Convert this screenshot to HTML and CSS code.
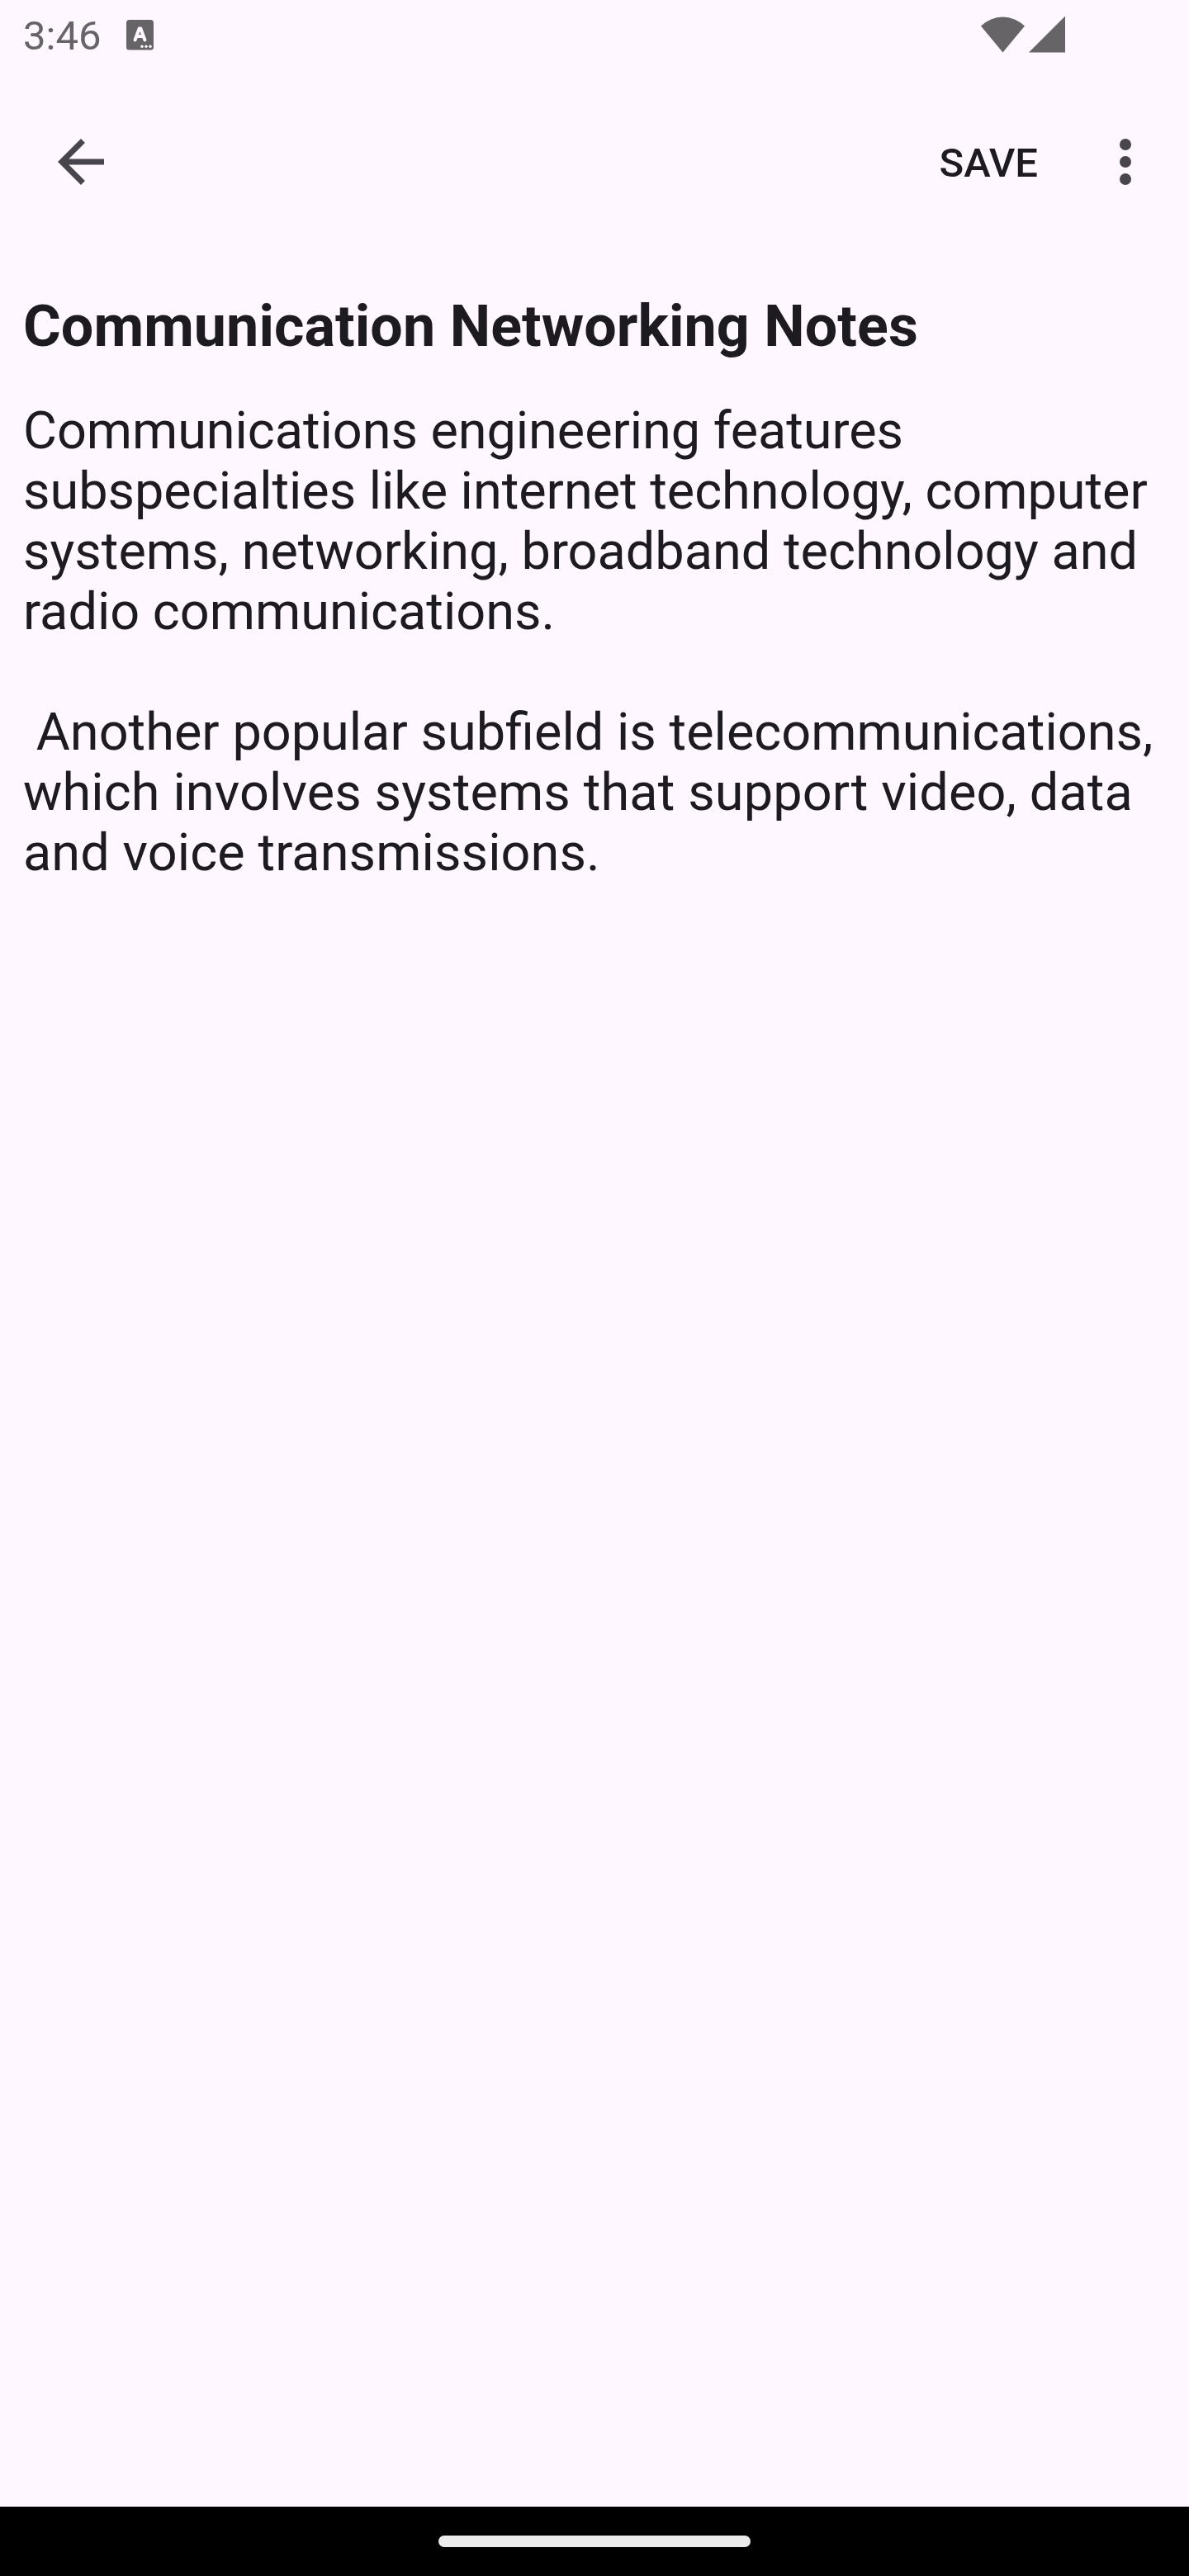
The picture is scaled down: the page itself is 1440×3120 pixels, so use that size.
FILE: index.html
```html
<!DOCTYPE html>
<html lang="en">
<head>
<meta charset="utf-8">
<title>Notes</title>
<link rel="stylesheet" href="styles.css">
</head>
<body>
<div class="screen">
  <header class="status">
    <span class="time">3:46</span>
    <svg class="keyboard" viewBox="0 0 33 37"><rect width="33" height="36.500" rx="3.500" fill="#676468"/><path d="M10.500 24.500 15.700 10.500h1.600L22.500 24.500M12.500 20h8" fill="none" stroke="#fef7ff" stroke-width="4" stroke-linecap="round" stroke-linejoin="round"/><g fill="#fef7ff"><circle cx="19" cy="32.300" r="1.700"/><circle cx="24" cy="32.300" r="1.700"/><circle cx="29" cy="32.300" r="1.700"/></g></svg>
    <svg class="signals" viewBox="0 0 102 46"><path d="M0 12.500A37.500 37.500 0 0 1 53 12.500L26.500 44.500zM58 44.500 102 .5V44.500z" fill="#676468"/></svg>
  </header>
  <nav class="toolbar">
    <svg class="back" viewBox="0 0 56 56"><path d="M56 24.500H13.400L32.970 4.930 28 0 0 28 28 56l4.940-4.940L13.400 31.500H56z" fill="#49454f"/></svg>
    <span class="save">SAVE</span>
    <svg class="more" viewBox="0 0 14 56"><g fill="#49454f"><circle cx="7" cy="7" r="7"/><circle cx="7" cy="28" r="7"/><circle cx="7" cy="49" r="7"/></g></svg>
  </nav>
  <main class="note">
    <h1 class="title">Communication Networking Notes</h1>
    <div class="body"><span class="tight">Communications engineering features</span>
<span class="snug">subspecialties like internet technology, computer</span>
<span>systems, networking, broadband technology and</span>
<span>radio communications.</span>

<span class="joined"> Another popular subfield is telecommunications,</span>
<span class="loose">which involves systems that support video, data</span>
<span class="wide">and voice transmissions.</span></div>
  </main>
  <footer class="gesture"><div class="handle"></div></footer>
</div>
</body>
</html>
```
FILE: styles.css
```css
* { box-sizing: border-box; }
body { margin: 0; background: #fef7ff; color: #1d1b20; font-family: Roboto, "Noto Sans", sans-serif; }
svg { display: block; flex: none; }
.screen { display: flex; flex-direction: column; width: 1440px; height: 3120px; }
.status { display: flex; align-items: flex-start; height: 112px; padding: 0 150px 0 28px; color: #676468; }
.time { margin-top: 15px; font-size: 49px; line-height: 58px; }
.keyboard { width: 33px; height: 37px; margin: 24px 0 0 30.5px; }
.signals { width: 102px; height: 46px; margin: 19px 0 0 auto; }
.toolbar { display: flex; align-items: center; height: 168px; padding: 0 70px; }
.back { width: 56px; height: 56px; }
.save { margin: 4px 99px 0 auto; font-size: 49px; font-weight: 500; line-height: 58px; }
.more { width: 14px; height: 56px; }
.note { flex: 1; padding: 74px 28px 0; }
.title { margin: 0 0 49px; font-size: 70px; font-weight: 700; line-height: 82px; letter-spacing: 0.06px; }
.body { font-size: 63px; line-height: 73px; white-space: pre; }
.tight { letter-spacing: -0.06px; }
.snug { letter-spacing: -0.033px; }
.joined { word-spacing: 0.12px; }
.loose { letter-spacing: 0.12px; }
.wide { letter-spacing: 0.09px; }
.gesture { display: flex; justify-content: center; height: 84px; padding-top: 35px; background: #000; }
.handle { width: 378px; height: 14px; border-radius: 7px; background: #ebebeb; }
```
